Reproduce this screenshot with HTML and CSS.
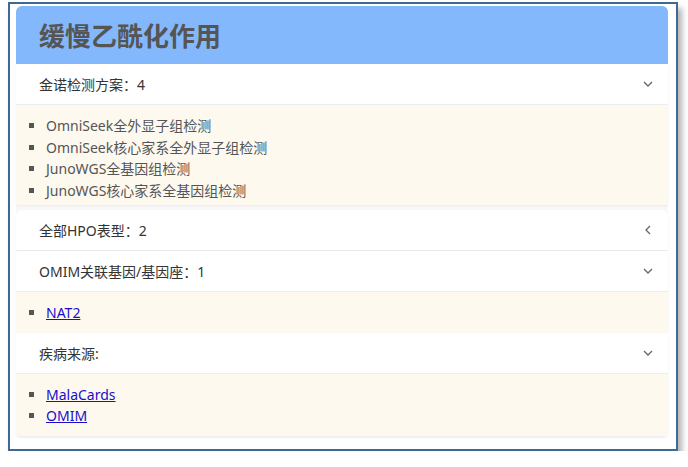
FILE: index.html
```html
<!DOCTYPE html>
<html lang="zh">

<head>
    <meta charset="UTF-8">
    <meta name="viewport" content="width=device-width, initial-scale=1.0">
    <title>缓慢乙酰化作用</title>
    <link rel="stylesheet" href="styles.css">
</head>

<body>
    <div class="frame">
        <div class="card">
            <div class="card-title">
                <h1>缓慢乙酰化作用</h1>
            </div>

            <div class="panel">
                <div class="panel-head">
                    <span>金诺检测方案：4</span>
                    <svg class="arrow" width="12" height="12" viewBox="0 0 12 12"><path d="M2 4 L6 8 L10 4" /></svg>
                </div>
                <div class="panel-body first-body">
                    <ul>
                        <li>OmniSeek全外显子组检测</li>
                        <li>OmniSeek核心家系全外显子组检测</li>
                        <li>JunoWGS全基因组检测</li>
                        <li>JunoWGS核心家系全基因组检测</li>
                    </ul>
                </div>
            </div>

            <div class="panel panel-closed">
                <div class="panel-head">
                    <span>全部HPO表型：2</span>
                    <svg class="arrow" width="12" height="12" viewBox="0 0 12 12"><path d="M8 2 L4 6 L8 10" /></svg>
                </div>
            </div>

            <div class="panel">
                <div class="panel-head">
                    <span>OMIM关联基因/基因座：1</span>
                    <svg class="arrow" width="12" height="12" viewBox="0 0 12 12"><path d="M2 4 L6 8 L10 4" /></svg>
                </div>
                <div class="panel-body">
                    <ul>
                        <li><a href="#">NAT2</a></li>
                    </ul>
                </div>
            </div>

            <div class="panel">
                <div class="panel-head">
                    <span>疾病来源:</span>
                    <svg class="arrow" width="12" height="12" viewBox="0 0 12 12"><path d="M2 4 L6 8 L10 4" /></svg>
                </div>
                <div class="panel-body">
                    <ul>
                        <li><a href="#">MalaCards</a></li>
                        <li><a href="#">OMIM</a></li>
                    </ul>
                </div>
            </div>
        </div>
    </div>
</body>

</html>
```

FILE: styles.css
```css
body {
    margin: 0;
    background: #fff;
    font-family: "Noto Sans", "Noto Sans CJK SC", sans-serif;
    font-size: 14px;
}

.frame {
    margin: 2px 0 0 8px;
    width: 670px;
    height: 449px;
    border: 2px solid #3f6895;
    padding: 2px 8px 0 6px;
    box-sizing: border-box;
    box-shadow: 4px 6px 6px rgba(0, 0, 0, 0.3);
    background: #fff;
}

.card {
    background: #f8f8fa;
    border-radius: 6px;
    padding-bottom: 2px;
}

.card-title {
    background: #84b8fd;
    border-radius: 6px 6px 0 0;
    height: 58px;
    display: flex;
    align-items: center;
    padding-left: 23px;
}

.card-title h1 {
    margin: 0;
    font-size: 26px;
    font-weight: bold;
    color: #555;
}

.panel {
    background: #fff;
    box-shadow: 0 1px 3px rgba(0, 0, 0, 0.06);
}

.panel-closed {
    margin-top: 5px;
    border-radius: 6px 6px 0 0;
}

.panel-head {
    height: 40px;
    border-bottom: 1px solid #ebeef0;
    display: flex;
    align-items: center;
    justify-content: space-between;
    padding: 0 14px 0 23px;
    color: #333;
}

.arrow {
    fill: none;
    stroke: #666;
    stroke-width: 1.3;
}

.panel-body {
    background: #fdf9ef;
    padding: 10px 0 9px;
}

.first-body {
    padding-bottom: 4px;
}

.panel-body ul {
    margin: 0;
    padding-left: 30px;
    list-style: square;
    color: #555;
    line-height: 21.5px;
}

.panel-body a {
    color: #1a0dcc;
}
```
